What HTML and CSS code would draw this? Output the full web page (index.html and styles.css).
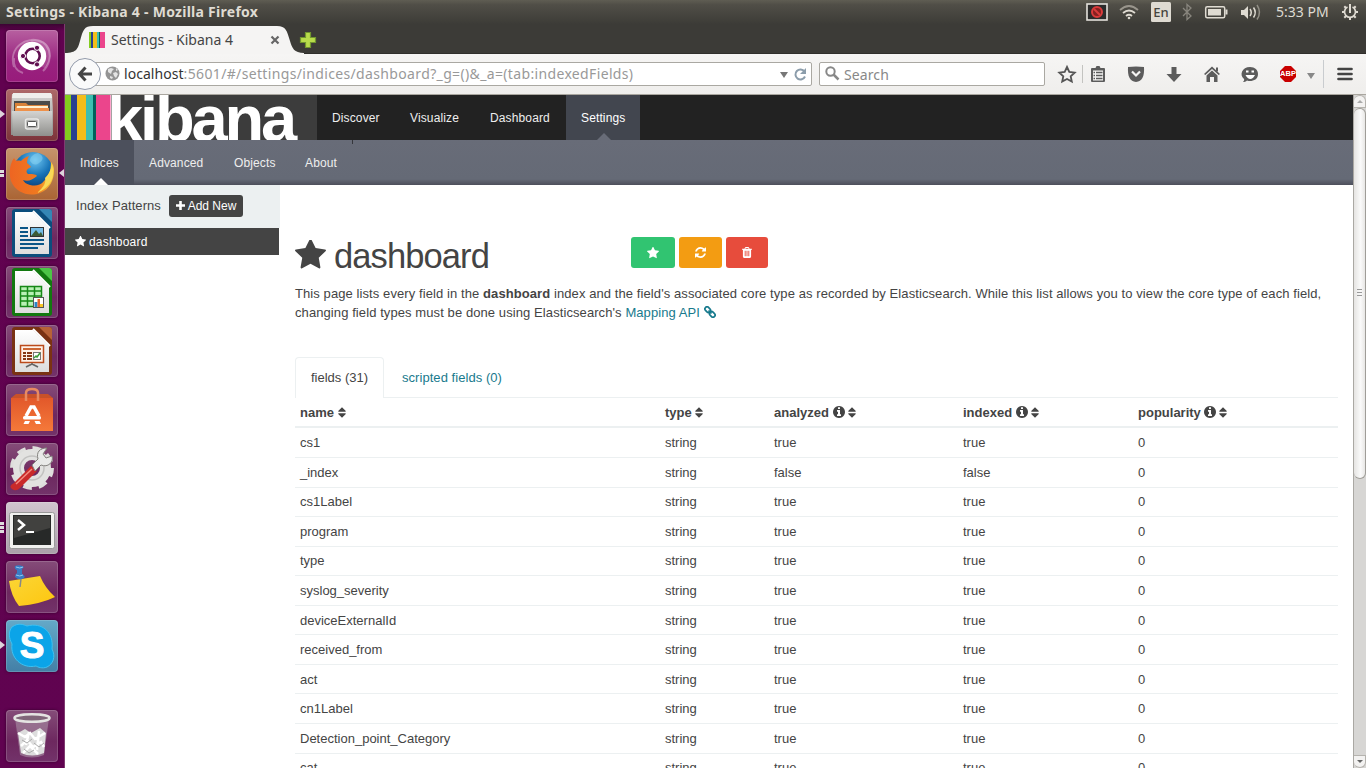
FILE: index.html
```html
<!DOCTYPE html>
<html lang="en">
<head>
<meta charset="utf-8">
<title>Settings - Kibana 4</title>
<link rel="stylesheet" href="styles.css">
</head>
<body>
<svg class="defs" aria-hidden="true">
  <defs>
    <symbol id="star" viewBox="64 100 1664 1600"><path d="M1728 647q0 22-26 48l-363 354 86 500q1 7 1 20 0 21-10.500 35.500t-30.500 14.500q-19 0-40-12l-449-236-449 236q-22 12-40 12-21 0-31.500-14.500t-10.500-35.500q0-6 2-20l86-500-364-354q-25-27-25-48 0-37 56-46l502-73 225-455q19-41 49-41t49 41l225 455 502 73q56 9 56 46z"/></symbol>
    <symbol id="refresh" viewBox="128 128 1536 1536"><path d="M1639 1056q0 5-1 7-64 268-268 434.500t-478 166.500q-146 0-282.500-55t-243.500-157l-129 129q-19 19-45 19t-45-19-19-45v-448q0-26 19-45t45-19h448q26 0 45 19t19 45-19 45l-137 137q71 66 161 102t187 36q134 0 250-65t186-179q11-17 53-117 8-23 30-23h192q13 0 22.500 9.500t9.500 22.500zm25-800v448q0 26-19 45t-45 19h-448q-26 0-45-19t-19-45 19-45l138-138q-148-137-349-137-134 0-250 65t-186 179q-11 17-53 117-8 23-30 23h-199q-13 0-22.500-9.500t-9.500-22.500v-7q65-268 270-434.500t480-166.500q146 0 284 55.500t245 156.500l130-129q19-19 45-19t45 19 19 45z"/></symbol>
    <symbol id="trash" viewBox="192 128 1408 1536"><path d="M704 1376v-704q0-14-9-23t-23-9h-64q-14 0-23 9t-9 23v704q0 14 9 23t23 9h64q14 0 23-9t9-23zm256 0v-704q0-14-9-23t-23-9h-64q-14 0-23 9t-9 23v704q0 14 9 23t23 9h64q14 0 23-9t9-23zm256 0v-704q0-14-9-23t-23-9h-64q-14 0-23 9t-9 23v704q0 14 9 23t23 9h64q14 0 23-9t9-23zm-544-992h448l-48-117q-7-9-17-11h-317q-10 2-17 11zm928 32v64q0 14-9 23t-23 9h-96v948q0 83-47 143.500t-113 60.500h-832q-66 0-113-58.500t-47-141.500v-952h-96q-14 0-23-9t-9-23v-64q0-14 9-23t23-9h309l70-167q15-37 54-63t79-26h320q40 0 79 26t54 63l70 167h309q14 0 23 9t9 23z"/></symbol>
    <symbol id="info" viewBox="128 128 1536 1536"><path d="M1152 1376v-160q0-14-9-23t-23-9h-96v-512q0-14-9-23t-23-9h-320q-14 0-23 9t-9 23v160q0 14 9 23t23 9h96v320h-96q-14 0-23 9t-9 23v160q0 14 9 23t23 9h448q14 0 23-9t9-23zm-128-896v-160q0-14-9-23t-23-9h-192q-14 0-23 9t-9 23v160q0 14 9 23t23 9h192q14 0 23-9t9-23zm640 416q0 209-103 385.500t-279.500 279.500-385.500 103-385.500-103-279.500-279.500-103-385.500 103-385.500 279.500-279.500 385.500-103 385.500 103 279.500 279.500 103 385.500z"/></symbol>
    <symbol id="sort" viewBox="0 0 8 11"><path d="M4 .2 7.800 4Q8 4.800 7.200 4.800H.8Q0 4.800.2 4ZM.8 6.200h6.400Q8 6.200 7.800 7L4 10.800.2 7Q0 6.200.8 6.200Z"/></symbol>
    <linearGradient id="paper" x2="0" y2="1"><stop stop-color="#fff"/><stop offset="1" stop-color="#ddd"/></linearGradient>
    <linearGradient id="steel" x2="0" y2="1"><stop stop-color="#d4d4d2"/><stop offset="1" stop-color="#8f8f8c"/></linearGradient>
    <radialGradient id="globe" cx=".55" cy=".2" r=".8"><stop stop-color="#6cc5f2"/><stop offset=".5" stop-color="#1672b6"/><stop offset="1" stop-color="#0a2f66"/></radialGradient>
    <linearGradient id="fox" x1="0" x2="1"><stop stop-color="#ee6522"/><stop offset=".65" stop-color="#f07a20"/><stop offset="1" stop-color="#f9cf3c"/></linearGradient>
    <linearGradient id="bag" x2="0" y2="1"><stop stop-color="#e2582a"/><stop offset="1" stop-color="#f5793a"/></linearGradient>
    <linearGradient id="note" x2="1" y2="1"><stop stop-color="#fbd636"/><stop offset="1" stop-color="#fdc60f"/></linearGradient>
  </defs>
</svg>

<header class="panel">
  <span class="panel-title">Settings - Kibana 4 - Mozilla Firefox</span>
  <svg class="tray" width="280" height="24" viewBox="0 0 280 24" fill="none">
    <rect x="1" y="4" width="20" height="16" fill="#2b2b2b" stroke="#e4e2dc" stroke-width="1.600"/>
    <circle cx="11" cy="12" r="5" fill="#852020" stroke="#d93b3b" stroke-width="2"/><path d="m8 9 6 6" stroke="#d93b3b" stroke-width="2"/>
    <path d="M34 10q9-8 18 0" stroke="#99958c" stroke-width="1.800"/><path d="M37 13q6-5 12 0M40 16q3-2.500 6 0" stroke="#dfdbd2" stroke-width="1.800"/><circle cx="43" cy="18" r="1.300" fill="#dfdbd2"/>
    <rect x="65" y="2" width="20" height="20" rx="1.500" fill="#dfdbd2"/>
    <path d="m97 8 8 8-4 3.500V4.500l4 3.500-8 8" stroke="#89867e" stroke-width="1.300"/>
    <rect x="119.700" y="6.700" width="19" height="11" rx="1.500" stroke="#dfdbd2" stroke-width="1.500"/><path d="M122 9h13v6.500h-13z" fill="#dfdbd2"/><path d="M140.500 9.500v5" stroke="#dfdbd2" stroke-width="2"/>
    <path d="M155 10h3l4-4v13l-4-4h-3z" fill="#dfdbd2"/><path d="M164 9q2.500 3.500 0 7M167.500 7.500q3.500 5 0 10" stroke="#dfdbd2" stroke-width="1.500"/><path d="M171 5q5 7.500 0 14.500" stroke="#918e85" stroke-width="1.500"/>
    <g transform="translate(264 12)" stroke="#dfdbd2"><path d="M-2.500-5A5.500 5.500 0 1 0 2.500-5" stroke-width="1.700"/><path d="M0-8V1M-8 0h2.500M5.500 0H8M0 5.500V8M-5.700 5.700-4 4M5.700 5.700 4 4M-5.700-5.700-4-4M5.700-5.700 4-4" stroke-width="2"/></g>
  </svg>
  <span class="lang">En</span>
  <time class="clock">5:33 PM</time>
</header>

<div class="desktop">
  <aside class="launcher">
    <div class="tile dash"><svg viewBox="0 0 52 52" fill="none">
      <path d="M8 37C2 18 20 5 36 12M25 10c20-2 24 20 12 31M17 43c-7-2-10-8-9-15" stroke="#fff" stroke-opacity=".3" stroke-width="2"/><path d="M24 10c18-4 28 14 15 28l-6-2V20z" fill="#fff" opacity=".15"/>
      <circle cx="26" cy="26" r="14.200" fill="#fff"/><circle cx="26.500" cy="26" r="7.200" stroke="#601050" stroke-width="2.600"/>
      <g stroke="#fff" stroke-width="1"><circle cx="17" cy="26" r="2.600" fill="#601050"/><circle cx="31" cy="17.800" r="2.600" fill="#601050"/><circle cx="31" cy="34.400" r="2.600" fill="#601050"/></g></svg></div>
    <div class="tile files"><svg viewBox="0 0 52 52">
      <path d="M6 5h40l1 18v23H5V23z" fill="url(#steel)"/><path d="M7 4h38l1 5H6z" fill="#efefec"/><path d="M8 12h36v11H8z" fill="#4c4c4a"/><path d="M9 14h11l2 2h20v7H9z" fill="#d98238"/><path d="M11 17h31v4H10z" fill="#fff0cf"/><path d="M9 19h34v4H9z" fill="#ee914a"/><path d="M6 22h40v25H7z" fill="url(#steel)"/><rect x="19.500" y="30" width="13" height="10" rx="2" fill="#b3b3b1" stroke="#e8e8e6" stroke-width="1.500"/><rect x="21.500" y="32.500" width="9" height="5" rx="1" fill="#fff" stroke="#555"/></svg><i class="pip"></i></div>
    <div class="tile firefox"><svg viewBox="0 0 52 52">
      <circle cx="27" cy="24" r="20" fill="url(#globe)"/><path d="M32 5c7 3 5 8 1 10-4 3-7 1-9-2 0-4 3-7 8-8Z" fill="#8bd4f2" opacity=".5"/>
      <path d="M8 10C3 17 3 27 5 33c5 12 18 16 29 12 10-4 14-13 14-23 0-5-3-8-3-8 0 10-3 15-7 19-4 5-9 5-14 4-4-1-6-3-7-5 5 2 9 0 14-4-1-2-6-2-9-2-3-3-1-5 3-7-1-2-3-3-4-4 0-3 1-5 2-7-4 1-6 3-8 5-3-1-5 0-5 0z" fill="url(#fox)"/><path d="M46 16c4 15-3 24-15 29 8-7 9-11 8-15 4-4 6-8 7-14z" fill="#f9d957"/></svg><i class="pip bars two"></i><i class="pip active"></i></div>
    <div class="tile"><svg viewBox="0 0 52 52">
      <path d="M6 5q0-3 3-3h34q3 0 3 3v42q0 3-3 3H9q-3 0-3-3z" fill="#0b4d7c"/><path d="M33 2h10q3 0 3 3v10z" fill="#3486b5"/><path d="M9 5h18l16 16v26H9z" fill="url(#paper)"/><path d="m27 4 17 17" stroke="#fff" stroke-width="2"/>
      <path d="M14 21h8M14 25h8M14 29h8M14 33h24M14 37h24M14 41h18" stroke="#0b5687" stroke-width="2"/><rect x="24.500" y="20.500" width="13" height="9" fill="#75bde7" stroke="#333"/><path d="m25 29 5-6 3 4 2-2 2 4z" fill="#3c5b36"/></svg></div>
    <div class="tile"><svg viewBox="0 0 52 52">
      <path d="M6 5q0-3 3-3h34q3 0 3 3v42q0 3-3 3H9q-3 0-3-3z" fill="#12780f"/><path d="M33 2h10q3 0 3 3v10z" fill="#4cc446"/><path d="M9 5h18l16 16v26H9z" fill="url(#paper)"/><path d="m27 4 17 17" stroke="#fff" stroke-width="2"/>
      <path d="M14 20h21v20H14z" fill="#b9f1b5"/><path d="M14.500 20.500h21v20h-21zM14 25h21M14 30h21M14 35h21M21.500 20v20M28.500 20v20" fill="none" stroke="#168817" stroke-width="1.500"/><rect x="27.500" y="31.500" width="10" height="10" fill="#fff" stroke="#555"/><path d="M28.500 36h3v5h-3z" fill="#2a85c7"/><path d="M31.500 33h2.500v8h-2.500z" fill="#e6662e"/><path d="M34 38h3v3h-3z" fill="#f7c624"/></svg></div>
    <div class="tile"><svg viewBox="0 0 52 52">
      <path d="M6 5q0-3 3-3h34q3 0 3 3v42q0 3-3 3H9q-3 0-3-3z" fill="#7a3213"/><path d="M33 2h10q3 0 3 3v10z" fill="#b76237"/><path d="M9 5h18l16 16v26H9z" fill="url(#paper)"/><path d="m27 4 17 17" stroke="#fff" stroke-width="2"/>
      <rect x="14.500" y="20.500" width="23" height="17" fill="#fff2e8" stroke="#bb4b1c" stroke-width="1.500"/><path d="M17 24h18" stroke="#cc6634" stroke-width="2"/><path d="M17 28h3M17 31h3M17 34h3M21 28h5M21 31h5M21 34h5" stroke="#873815" stroke-width="2"/><rect x="27.500" y="27.500" width="7" height="7" fill="#fff" stroke="#777"/><path d="m28 33 2-2 1 1 3-4" stroke="#3b9c39" stroke-width="1.500" fill="none"/><path d="M26 38v2m-6 2 6-3 6 3" stroke="#666" stroke-width="1.700" fill="none"/></svg></div>
    <div class="tile"><svg viewBox="0 0 52 52">
      <path d="m5 14 5-4h32l5 4z" fill="#c85129"/><path d="M5 14h42v33H5z" fill="url(#bag)"/><path d="M20 17V9q0-4 6-4t6 4v8" fill="none" stroke="#e88a61" stroke-width="2.500"/><path d="m20 32 5-9h3l5 9" fill="none" stroke="#fff" stroke-width="3.500"/><rect x="17" y="32" width="18" height="3.500" rx="1.500" fill="#fff"/><path d="M17.500 40h5l1.500-3h-5zM35 40h-5l-1.500-3h5z" fill="#fff"/></svg></div>
    <div class="tile"><svg viewBox="0 0 52 52">
      <circle cx="26" cy="25" r="19.500" fill="none" stroke="#dededc" stroke-width="5" stroke-dasharray="8.500 6.800"/><circle cx="26" cy="25" r="13.500" fill="none" stroke="#e2e2e0" stroke-width="11"/><circle cx="26" cy="25" r="12" fill="none" stroke="#c2c2c0" stroke-width="1.500"/>
      <path d="m8 40 17-17 6 5-17 17q-4 4-8 1t2-6z" fill="#c92a2a"/><path d="m10 41 16-15" stroke="#f38c80" stroke-width="1.500"/><path d="m26 22 6-6c-2-7 2-11 9-11l-4 6 3 4 6-2c2 6-4 12-11 9l-6 6z" fill="#e9eae8" stroke="#83827e"/></svg></div>
    <div class="tile terminal"><svg viewBox="0 0 52 52">
      <rect x="3.500" y="10.500" width="45" height="36" rx="2" fill="#f1f1ef" stroke="#999"/><rect x="7" y="13" width="38" height="30" fill="#272928"/><path d="M8 14h36v12L8 36z" fill="#41413f"/><path d="m12 18 6 5-6 5" fill="none" stroke="#fff" stroke-width="2.500"/><path d="M20 30h8" stroke="#fff" stroke-width="2"/></svg><i class="pip bars three"></i></div>
    <div class="tile"><svg viewBox="0 0 52 52">
      <path d="m3 19 31-4q3 13 15 22l-32 9Q5 34 3 19z" fill="#815b17" opacity=".3"/><path d="m3 20 31-5q5 12 15 21-14 7-36 9Q5 35 3 20z" fill="url(#note)"/><path d="m15 18-1 8" stroke="#888" stroke-width="1.500"/><path d="M9 5q5-2 9 1l-2 2v5q4 2 2 4-5 3-9-1 0-3 2-4V9Q8 8 9 5z" fill="#397bc3"/><path d="M10 6q4 2 7 0M10 14q4 2 7 0" stroke="#96c8ee" fill="none"/></svg></div>
    <div class="tile skype"><svg viewBox="0 0 52 52">
      <path d="M6 7C13 2 18 5 21 6 36 2 48 12 46 29c4 8 1 15-5 18-5 2-9 0-11-1C16 49 4 38 6 24 3 18 2 12 6 7z" fill="#0ba4e8" stroke="#3ec1f1"/></svg><b class="letter">S</b><i class="pip"></i></div>
    <div class="tile trash"><svg viewBox="0 0 52 52">
      <path d="m9 8 5 37q12 5 24 0l5-37z" fill="#a68aa2" opacity=".65"/><path d="m12 23 7-4 6 4 9-5 6 5-2 20q-12 5-23 0z" fill="#ddd"/><path d="m12 23 7 4 5-4 5 6 10-6M15 36l6-6 6 7 8-5 3 5M17 43l7-7 8 8M23 22l-3 13M33 21l-2 19" stroke="#fff" fill="none" stroke-width="2.500"/><path d="m16 30 5 3 5-4m2 4 5 4 5-4M18 39l5 4 5-3" stroke="#aaa" fill="none"/><ellipse cx="26" cy="8" rx="17.500" ry="3.800" fill="#806679" stroke="#e4e4e2" stroke-width="2.500"/></svg></div>
  </aside>

  <div class="browser">
    <div class="tabstrip">
      <svg class="tab-shape" width="260" height="30" viewBox="0 0 260 30"><path d="M0 30v-1c12 0 13-5 15-12C18 6 19 2 28 2h184c9 0 10 5 13 15 2 7 4 12 14 12v1z" fill="#f5f4f3"/></svg>
      <span class="favicon"></span>
      <span class="tab-title">Settings - Kibana 4</span>
      <svg class="tab-close" width="10" height="10" viewBox="0 0 10 10"><path d="m1.500 1.500 7 7m0-7-7 7" stroke="#666" stroke-width="2.200"/></svg>
      <svg class="tab-new" width="18" height="18" viewBox="0 0 18 18"><path d="M6.500 1.500h5v5h5v5h-5v5h-5v-5h-5v-5h5z" fill="#b8dc4b" stroke="#71962e" stroke-width="1.200"/></svg>
    </div>
    <div class="toolbar">
      <div class="urlbar">
        <svg class="site" width="15" height="15" viewBox="0 0 15 15"><circle cx="7.500" cy="7.500" r="7" fill="#949494"/><path d="m3 3 3-1 3 1-2 2-1 3-3-2zm5 4 3-1 2 2-2 4-2-2zM5 10l3 1-1 2-2-1zM11 2l2 2-2 1z" fill="#e4e4e4"/></svg>
        <span class="url"><b>localhost</b>:5601/#/settings/indices/dashboard?_g=()&amp;_a=(tab:indexedFields)</span>
        <svg class="url-tools" width="28" height="16" viewBox="0 0 28 16"><path d="M0 6h8l-4 6z" fill="#777"/><path d="M24.500 5.500a5 5 0 1 0 .5 5" fill="none" stroke="#8c9dab" stroke-width="2"/><path d="M26 2v6h-6z" fill="#8c9dab"/></svg>
      </div>
      <span class="back"><svg width="16" height="16" viewBox="0 0 16 16"><path d="M8.500 1.500 2.500 8l6 6.500M3 8h12" fill="none" stroke="#444" stroke-width="3"/></svg></span>
      <div class="search"><svg width="15" height="15" viewBox="0 0 15 15"><circle cx="5.500" cy="5.500" r="4.200" fill="none" stroke="#888" stroke-width="2"/><path d="m8.500 8.500 5 5" stroke="#888" stroke-width="2.500"/></svg><span>Search</span></div>
      <svg class="tools" width="300" height="38" viewBox="0 0 300 38" fill="#5c5c5c">
        <path d="m12 12 2.300 5 5.400.600-4 3.700 1.100 5.300L12 24l-4.800 2.600 1.100-5.300-4-3.700 5.400-.600z" fill="none" stroke="#555" stroke-width="1.800"/><path d="M27.500 10v18" stroke="#c3c3c0"/>
        <path d="M37 13h3.500l1-2h3l1 2H49q1 0 1 1v12q0 1-1 1H37q-1 0-1-1V14q0-1 1-1z"/><path d="M38 15.500h10v10H38z" fill="#f5f4f3"/><path d="M38.500 17.500h1.500M41 17.500h6.500M38.500 20.500h1.500M41 20.500h6.500M38.500 23.500h1.500M41 23.500h6.500" stroke="#5c5c5c" stroke-width="1.500"/>
        <path d="M73 12q8-1 16 0 1 14-8 15-9-1-8-15z"/><path d="m77 16.500 4 4 4-4" fill="none" stroke="#f5f4f3" stroke-width="2.200"/>
        <path d="M116.500 12h5v7h5l-7.500 8-7.500-8h5z"/>
        <path d="m157 11.500 8 7.500-1.300 1-6.700-6-6.700 6-1.300-1z"/><path d="M151.500 20.500 157 15.500l5.500 5V27H159v-5h-4v5h-3.500zM161 12.500h2v4h-2z"/>
        <path d="M195 12c5 0 8 3 8 7 0 5-4 7-8 7-1 0-2 0-3-.500-1 1.500-3 1.500-4 1.500 1-1 1.500-2 1-3-5-4-2-12 6-12z"/><path d="M191 15.500h2.500v2H191zm5.500 0h2.500v2h-2.500z" fill="#fff"/><path d="M190.500 20h9.500q-2 4-4.700 4t-4.800-4" fill="#fff"/>
        <path d="M230 11h6l5 5v6l-5 5h-6l-5-5v-6z" fill="#c90000"/><path d="M252 18h8l-4 6z" fill="#888"/><path d="M268.500 5v28" stroke="#c9cccf"/><path d="M283.500 14h13M283.500 19h13M283.500 24h13" stroke="#444" stroke-width="2.700" stroke-linecap="round"/>
      </svg>
      <b class="abp">ABP</b>
    </div>

    <div class="viewport">
      <main class="page">
        <nav class="topnav">
          <div class="logo"><span class="stripes"></span><b>kibana</b></div>
          <a class="w48">Discover</a><a class="w50">Visualize</a><a class="w61">Dashboard</a><a class="w44 current">Settings</a>
        </nav>
        <nav class="subnav"><a class="w39 current">Indices</a><a class="w55">Advanced</a><a class="w41">Objects</a><a class="w33">About</a><span class="tick"></span></nav>
        <div class="columns">
          <section class="sidebar">
            <div class="side-head"><span>Index Patterns</span><button class="add"><svg width="9" height="9" viewBox="0 0 9 9"><path d="M4.500 0v9M0 4.500h9" stroke="#fff" stroke-width="2.600"/></svg>Add New</button></div>
            <div class="side-item"><svg width="11" height="11"><use href="#star"/></svg>dashboard</div>
          </section>
          <section class="content">
            <div class="heading">
              <h1><svg width="31" height="30"><use href="#star"/></svg><span>dashboard</span></h1>
              <div class="actions">
                <button class="green"><svg width="12" height="12"><use href="#star"/></svg></button><button class="orange"><svg width="11" height="11"><use href="#refresh"/></svg></button><button class="red"><svg width="10" height="11"><use href="#trash"/></svg></button>
              </div>
            </div>
            <p class="intro"><span class="line1">This page lists every field in the <b>dashboard</b> index and the field's associated core type as recorded by Elasticsearch. While this list allows you to view the core type of each field,</span><br><span class="line2">changing field types must be done using Elasticsearch's <a>Mapping API <svg width="12" height="12" viewBox="0 0 12 12" fill="none" stroke="#187a8d" stroke-width="1.700"><rect x=".7" y="1.500" width="6" height="4.200" rx="2" transform="rotate(45 3.700 3.600)"/><rect x="5.300" y="6.300" width="6" height="4.200" rx="2" transform="rotate(45 8.300 8.400)"/><path d="m4.500 4.500 3 3"/></svg></a></span></p>
            <div class="tabs"><a class="selected">fields (31)</a><a class="other">scripted fields (0)</a></div>
            <table>
              <colgroup><col class="c1"><col class="c2"><col class="c3"><col class="c4"><col class="c5"></colgroup>
              <thead><tr><th>name <svg class="so"><use href="#sort"/></svg></th><th>type <svg class="so"><use href="#sort"/></svg></th><th>analyzed <svg class="in"><use href="#info"/></svg><svg class="so"><use href="#sort"/></svg></th><th>indexed <svg class="in"><use href="#info"/></svg><svg class="so"><use href="#sort"/></svg></th><th>popularity <svg class="in"><use href="#info"/></svg><svg class="so"><use href="#sort"/></svg></th></tr></thead>
              <tbody>
                <tr><td>cs1</td><td>string</td><td>true</td><td>true</td><td>0</td></tr>
                <tr><td>_index</td><td>string</td><td>false</td><td>false</td><td>0</td></tr>
                <tr><td>cs1Label</td><td>string</td><td>true</td><td>true</td><td>0</td></tr>
                <tr><td>program</td><td>string</td><td>true</td><td>true</td><td>0</td></tr>
                <tr><td>type</td><td>string</td><td>true</td><td>true</td><td>0</td></tr>
                <tr><td>syslog_severity</td><td>string</td><td>true</td><td>true</td><td>0</td></tr>
                <tr><td>deviceExternalId</td><td>string</td><td>true</td><td>true</td><td>0</td></tr>
                <tr><td>received_from</td><td>string</td><td>true</td><td>true</td><td>0</td></tr>
                <tr><td>act</td><td>string</td><td>true</td><td>true</td><td>0</td></tr>
                <tr><td>cn1Label</td><td>string</td><td>true</td><td>true</td><td>0</td></tr>
                <tr><td>Detection_point_Category</td><td>string</td><td>true</td><td>true</td><td>0</td></tr>
                <tr><td>cat</td><td>string</td><td>true</td><td>true</td><td>0</td></tr>
              </tbody>
            </table>
          </section>
        </div>
      </main>
      <div class="scrollbar"><span class="cap up"></span><span class="thumb"></span><span class="cap down"></span></div>
    </div>
  </div>
</div>
</body>
</html>
```

FILE: styles.css
```css
* { box-sizing: border-box; }
body { margin: 0; width: 1366px; height: 768px; overflow: hidden; background: #fff; font-family: "Liberation Sans", Arial, sans-serif; font-size: 13px; color: #444; }
svg { display: block; flex: none; }
button { font: inherit; border: 0; padding: 0; color: #fff; display: flex; align-items: center; justify-content: center; }
.defs { position: absolute; width: 0; height: 0; }

/* desktop panel */
.panel { position: relative; height: 24px; padding: 0 0 0 6px; display: flex; align-items: center; justify-content: space-between; background: linear-gradient(#5f5d53, #504e47 20%, #3f3e39 90%, #3c3b37); color: #dfdbd2; font-family: "Noto Sans", sans-serif; }
.panel-title { font-weight: 700; font-size: 14px; letter-spacing: .27px; line-height: 22px; padding-bottom: 1px; white-space: nowrap; }
.tray { width: 280px; }
.lang { position: absolute; left: 1151px; top: 2px; width: 20px; height: 20px; text-align: center; font-size: 13px; font-weight: 500; line-height: 21px; color: #46443d; }
.clock { position: absolute; left: 1276px; top: 0; line-height: 23px; font-size: 14px; white-space: nowrap; }

.desktop { display: flex; height: 744px; }

/* launcher */
.launcher { width: 65px; padding: 6px 0 0 6px; display: flex; flex-direction: column; gap: 7px; background: linear-gradient(#3c0433, #61024f 7px, #600350); border-right: 1px solid #7f3a70; }
.tile { position: relative; width: 52px; height: 52px; flex: none; border-radius: 4px; background: linear-gradient(#854c79, #6d285f 60%, #73336a); box-shadow: inset 0 0 0 1px rgba(255,255,255,.16), 0 0 3px #35002b; }
.tile svg { width: 52px; height: 52px; }
.dash { background: linear-gradient(#b760a0, #99237f 60%, #981b7b); }
.files { background: linear-gradient(#ad6969, #7c333a); }
.firefox { background: linear-gradient(#c6946c, #aa6434); }
.terminal { background: linear-gradient(#d1c6cf, #aaa0a9); }
.skype { background: linear-gradient(#64a9c8, #437fa6); }
.trash { margin-top: 31px; }
.letter { position: absolute; inset: 0; text-align: center; font: 700 37px/52px "Liberation Sans", Arial, sans-serif; color: #fff; -webkit-text-stroke: 1px #fff; }
.pip { position: absolute; left: -6px; top: 21px; border: 4px solid transparent; border-left: 5px solid #ddd4db; border-right: 0; }
.pip.active { left: 53px; top: 21px; border-left: 0; border-right: 5px solid #ddd4db; }
.pip.bars { border: 0; width: 4px; }
.pip.two { top: 22px; height: 7px; background: linear-gradient(#ddd 3px, transparent 3px 4px, #ddd 4px); }
.pip.three { top: 20px; height: 11px; background: linear-gradient(#ddd 3px, transparent 3px 4px, #ddd 4px 7px, transparent 7px 8px, #ddd 8px); }

/* browser chrome */
.browser { width: 1301px; display: flex; flex-direction: column; font-family: "Noto Sans", sans-serif; }
.tabstrip { position: relative; height: 30px; display: flex; align-items: center; padding-left: 24px; background: linear-gradient(#3c3b37 96%, #282724); }
.tab-shape { position: absolute; left: 0; top: 0; }
.favicon { position: relative; width: 16px; height: 16px; margin-top: 2px; background: linear-gradient(90deg, #84cc1e 2px, #2b3f91 2px 4px, #f3bd19 4px 8px, #3cbeb1 8px 10px, #00605b 10px 11px, #eb458c 11px); }
.tab-title { position: relative; width: 159px; padding-left: 6px; font-size: 14px; white-space: nowrap; }
.tab-close { position: relative; margin: 2px 0 0 6px; }
.tab-new { position: relative; margin: 2px 0 0 19px; }
.toolbar { position: relative; height: 41px; display: flex; align-items: center; padding: 0 0 1px 19px; background: linear-gradient(#f6f5f4, #efeeec); border-bottom: 1px solid #a9a69f; }
.urlbar, .search { height: 24px; display: flex; align-items: center; background: #fff; border: 1px solid #aaa8a2; border-radius: 2px; font-size: 14px; }
.urlbar { width: 728px; padding-left: 20px; }
.url { width: 656px; margin-left: 4px; line-height: 20px; padding-top: 1px; color: #999; white-space: nowrap; letter-spacing: .35px; }
.url b { font-weight: 400; color: #333; letter-spacing: .05px; }
.back { position: absolute; left: 4px; top: 4px; width: 32px; height: 32px; border: 1px solid #929aaa; border-radius: 50%; background: #fafafa; display: flex; align-items: center; justify-content: center; }
.search { width: 226px; margin-left: 7px; padding-left: 5px; gap: 4px; color: #888; letter-spacing: .1px; }
.search span { padding-top: 1px; }
.tools { margin-left: 10px; }
.abp { position: absolute; left: 1214px; top: 14px; width: 18px; text-align: center; font: 700 7.500px/12px "Liberation Sans", sans-serif; color: #fff; }

/* kibana */
.viewport { display: flex; height: 673px; overflow: hidden; font-family: "Liberation Sans", Arial, sans-serif; }
.page { width: 1288px; }
.topnav, .subnav { display: flex; height: 45px; font-size: 12px; line-height: 46px; color: #eee; letter-spacing: .13px; white-space: nowrap; }
.topnav { background: #222; }
.logo { position: relative; width: 252px; height: 45px; overflow: hidden; background: #3c3c3c; display: flex; }
.stripes { width: 46px; background: linear-gradient(90deg, #84cc1e 6px, #2b3f91 6px 12px, #f3bd19 12px 21px, #3cbeb1 21px 28px, #00605b 28px 31px, #eb458c 31px 45px, #ffa6cd 45px); }
.logo b { font-size: 65px; line-height: 45px; letter-spacing: -3.150px; color: #fff; margin: 1px 0 0 -4px; }
.topnav a, .subnav a { position: relative; box-sizing: content-box; height: 45px; padding: 0 15px; }
.subnav { background: linear-gradient(#686c78, #656a76 39px, #4d4f5b); }
.topnav .current { background: #42464f; }
.subnav .current { background: #4c505c; }
.current::after { content: ""; position: absolute; left: 50%; bottom: 0; margin-left: -6px; border: 7px solid transparent; border-top: 0; border-bottom-color: #686c78; }
.topnav .current { color: #fff; }
.subnav .current::after { border-bottom-color: #fff; }
.tick { width: 1px; height: 4px; margin-left: -1px; background: #35363b; }
.w48 { width: 48px; } .w50 { width: 50px; } .w61 { width: 61px; } .w44 { width: 44px; } .w39 { width: 39px; } .w55 { width: 55px; } .w41 { width: 41px; } .w33 { width: 33px; }
.columns { display: flex; }
.sidebar { width: 215px; }
.side-head { height: 43px; display: flex; align-items: center; padding: 0 0 2px 11px; background: #ecf0f1; }
.side-head span { width: 93px; white-space: nowrap; letter-spacing: .08px; }
.add { width: 74px; height: 22px; gap: 3px; border-radius: 3px; background: #444; font-size: 12px; }
.side-item { width: 214px; height: 27px; padding-left: 10px; display: flex; align-items: center; gap: 3px; background: #444; color: #fff; font-size: 12px; letter-spacing: .2px; }
.side-item svg, .add svg, .actions svg { fill: #fff; }
.content { width: 1073px; padding: 52px 15px 0; }
.heading { display: flex; height: 47px; }
h1 { width: 336px; margin: 0; display: flex; align-items: flex-start; gap: 8px; font-weight: 400; font-size: 34.500px; line-height: 39px; fill: #444; letter-spacing: -.900px; }
h1 svg { margin-top: 3px; }
.actions { display: flex; gap: 4px; }
.actions button { height: 31px; border-radius: 3px; }
.green { width: 44px; background: #31c471; } .orange { width: 43px; background: #f39c12; } .red { width: 42px; background: #e74c3c; }
.intro { margin: 0; height: 73px; line-height: 19px; white-space: nowrap; letter-spacing: .087px; }
.intro svg { display: inline-block; vertical-align: -1px; }
.intro a, .other { color: #187a8d; }
.tabs { display: flex; height: 41px; border-bottom: 1px solid #ecf0f1; line-height: 40px; }
.selected { width: 89px; height: 41px; padding-left: 15px; border: 1px solid #ecf0f1; border-bottom: 0; border-radius: 4px 4px 0 0; background: #fff; }
.other { padding: 1px 0 0 18px; letter-spacing: .05px; }
table { width: 1043px; table-layout: fixed; border-collapse: separate; border-spacing: 0; line-height: 18px; }
.c1 { width: 365px; } .c2 { width: 109px; } .c3 { width: 189px; } .c4 { width: 175px; }
th, td { padding: 5px; text-align: left; white-space: nowrap; }
th { height: 30.400px; padding: 6px 5px 4px; border-bottom: 2px solid #ecf0f1; }
td { height: 29.570px; padding: 5.800px 5px 4.700px; border-bottom: 1px solid #ecf0f1; }
th svg { display: inline-block; vertical-align: -1px; fill: #444; }
.so { width: 8px; height: 11px; }
.in { width: 12px; height: 12px; margin-right: 3px; }

.scrollbar { width: 13px; display: flex; flex-direction: column; background: #d7d6d4; border-left: 1px solid #aaa8a3; }
.cap { height: 13px; display: flex; align-items: center; justify-content: center; background: #f3f2f1; border: 1px solid #b5b3ae; border-left: 0; }
.cap::after { content: ""; border: 3px solid transparent; }
.up { border-radius: 7px 7px 0 0; } .down { border-radius: 0 0 7px 7px; margin-top: auto; }
.up::after { border-bottom-color: #aaa; border-top: 0; } .down::after { border-top-color: #666; border-bottom: 0; }
.thumb { height: 371px; border: 1px solid #9f9d98; border-left: 0; border-radius: 7px; background: repeating-linear-gradient(#999 0 1px, transparent 1px 3px) center 180px / 5px 7px no-repeat, linear-gradient(90deg, #e5e4e2, #fafafa 60%, #e8e7e5); }
```
